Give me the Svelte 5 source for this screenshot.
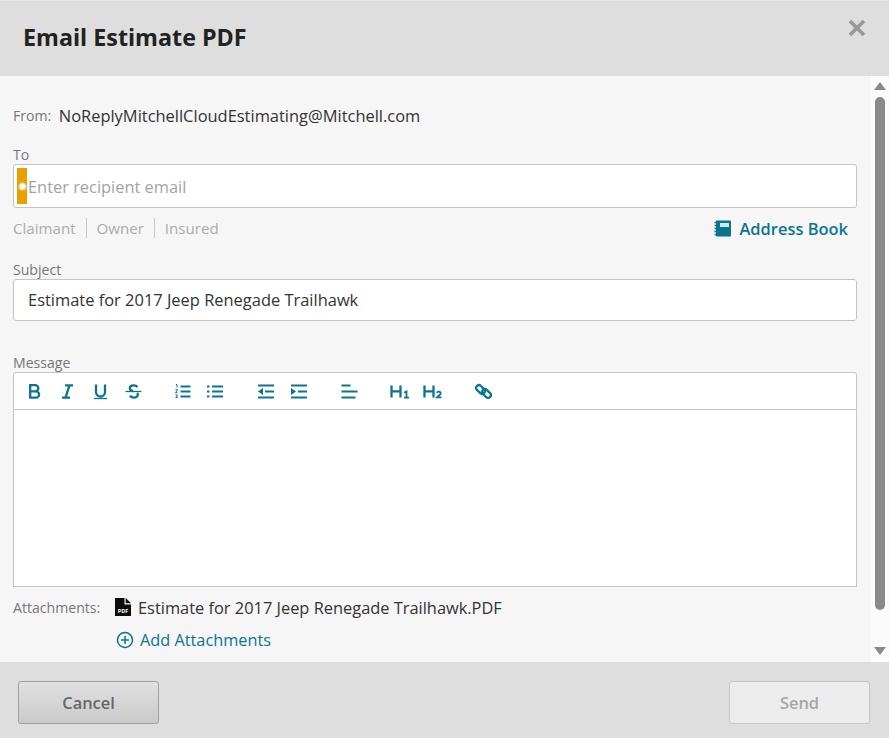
<script>
  const groups = [
    { cls: 'g1', items: ['b', 'i', 'u', 's'] },
    { cls: 'g2', items: ['ol', 'ul'] },
    { cls: 'g3', items: ['out', 'in'] },
    { cls: 'g4', items: ['al'] },
    { cls: 'g5', items: ['h1', 'h2'] },
    { cls: 'g6', items: ['link'] }
  ];
  const wide = (it) => it === 'h1' || it === 'h2';
</script>

<div class="modal">
  <header class="head">
    <h1>Email Estimate PDF</h1>
    <svg class="close" viewBox="0 0 18 18" aria-label="Close"><path d="M2 2l14 14M16 2L2 16" /></svg>
  </header>

  <div class="middle">
    <main class="content">
      <div class="from"><span class="lab">From:</span><span class="addr">NoReplyMitchellCloudEstimating@Mitchell.com</span></div>

      <div class="lab to-lab">To</div>
      <div class="field to">
        <span class="req"><i></i></span>
        <span class="ph">Enter recipient email</span>
      </div>

      <div class="recips">
        <div class="chips"><span>Claimant</span><span>Owner</span><span>Insured</span></div>
        <a class="book" href="#top">
          <svg viewBox="0 0 17 17" width="17" height="17">
            <rect x="2" y="0.500" width="15" height="16" rx="0.800" fill="#0b7590" />
            <rect x="6" y="3" width="9" height="4" fill="#d5e6ea" />
            <path d="M0.500 2.500h3M0.500 5.500h3M0.500 8.500h3M0.500 11.500h3M0.500 14.500h3" stroke="#0b7590" stroke-width="1.300" />
          </svg>
          Address Book
        </a>
      </div>

      <div class="lab sub-lab">Subject</div>
      <div class="field subject">Estimate for 2017 Jeep Renegade Trailhawk</div>

      <div class="lab msg-lab">Message</div>
      <div class="toolbar">
        {#each groups as g}
          <div class="group {g.cls}">
            {#each g.items as it}
              <svg class="ti" viewBox="0 0 {wide(it) ? 20 : 17} 17" width={wide(it) ? 20 : 17} height="17">
                {#if it === 'b'}
                  <path d="M4.200 2.200h5a3.100 3.100 0 0 1 0 6.200H4.200zM4.200 8.400h5.800a3.100 3.100 0 0 1 0 6.200H4.200z" />
                {:else if it === 'i'}
                  <path d="M6 2.400h8M3 14.600h8M10.500 2.400l-4 12.200" />
                {:else if it === 'u'}
                  <path d="M4 1.500v7.500a4.500 4.500 0 0 0 9 0V1.500" /><path class="thin" d="M2 15.500h13" />
                {:else if it === 's'}
                  <path d="M12.500 4.200c-.8-1.300-2.200-1.800-3.800-1.800-2.300 0-3.900 1.100-3.900 2.900 0 1.300 1 2.300 3.200 2.700M5 12.500c.7 1.400 2.200 2.100 3.800 2.100 2.400 0 4-1.200 4-3 0-.6-.2-1.200-.6-1.700" /><path class="thin" d="M0.500 8.500h16" />
                {:else if it === 'ol'}
                  <path class="mid" d="M6.500 3.500h10M6.500 8.500h10M6.500 13.500h10" /><path class="tiny" d="M2 1.500h1v3M1.500 6.700h2l-2 3h2M1.500 12h2l-1 1 1 1.500h-2" />
                {:else if it === 'ul'}
                  <path class="mid" d="M6 3.500h11M6 8.500h11M6 13.500h11M1 3.500h2.500M1 8.500h2.500M1 13.500h2.500" />
                {:else if it === 'out'}
                  <path class="mid" d="M1 2.500h16M8 8.500h9M1 14.500h16" /><path class="fill" d="M6 5v7l-5-3.500z" />
                {:else if it === 'in'}
                  <path class="mid" d="M1 2.500h16M8 8.500h9M1 14.500h16" /><path class="fill" d="M1 5v7l5-3.500z" />
                {:else if it === 'al'}
                  <path class="mid" d="M0.500 2.500h9M0.500 8.500h16M0.500 14.500h14" />
                {:else if it === 'h1'}
                  <path d="M1.500 2.500v12M10.500 2.500v12M1.500 8.400h9" /><path class="sm" d="M14 9.800l2.500-1.300v6.100M14 14.600h5" />
                {:else if it === 'h2'}
                  <path d="M1.500 2.500v12M10.500 2.500v12M1.500 8.400h9" /><path class="sm" d="M13.800 9.800c.3-1 2.200-1.600 3.300-.8 1 .8.500 1.900-.2 2.600l-2.900 2.800h4.500" />
                {:else}
                  <rect x="0.500" y="3.700" width="10" height="5.600" rx="2.800" transform="rotate(45 5.500 6.500)" />
                  <rect x="6.500" y="7.700" width="10" height="5.600" rx="2.800" transform="rotate(45 11.500 10.500)" />
                {/if}
              </svg>
            {/each}
          </div>
        {/each}
      </div>
      <div class="editor"></div>

      <div class="attach">
        <span class="lab att-lab">Attachments:</span>
        <svg class="pdf" viewBox="0 0 16 18" width="16" height="18">
          <path d="M0 0h9.500v6.500H16V18H0z" fill="#0c0c0c" />
          <path d="M10.700 0L16 5.300h-5.300z" fill="#0c0c0c" />
          <text x="8" y="15" text-anchor="middle" class="pdf-t">PDF</text>
        </svg>
        <span class="fname">Estimate for 2017 Jeep Renegade Trailhawk.PDF</span>
      </div>
      <a class="add" href="#top">
        <svg viewBox="0 0 18 18" width="18" height="18"><circle cx="9" cy="9" r="7.500" /><path d="M5 9h8M9 5v8" /></svg>
        Add Attachments
      </a>
    </main>

    <aside class="scroll">
      <span class="arrow up"></span>
      <span class="thumb"></span>
      <span class="arrow down"></span>
    </aside>
  </div>

  <footer class="foot">
    <button class="btn cancel">Cancel</button>
    <button class="btn send" disabled>Send</button>
  </footer>
</div>

<style>
  :global(body) {
    margin: 0;
    background: #dedede;
  }
  .modal {
    width: 889px;
    height: 738px;
    display: flex;
    flex-direction: column;
    font-family: "Open Sans", sans-serif;
    color: #333;
    overflow: hidden;
  }
  .head {
    height: 76px;
    flex: none;
    box-sizing: border-box;
    background: #dedede;
    border-top: 1px solid #e6e6e6;
    padding: 0 23px;
    display: flex;
    align-items: center;
    justify-content: space-between;
    position: relative;
  }
  h1 {
    margin: -3px 0 0;
    font-size: 23.300px;
    font-weight: 700;
    color: #222;
    line-height: 30px;
  }
  .close {
    position: absolute;
    right: 23px;
    top: 18px;
    width: 18px;
    height: 18px;
    fill: none;
    stroke: #999;
    stroke-width: 3.800;
  }
  .middle {
    flex: 1;
    display: flex;
    min-height: 0;
    background: #f6f6f6;
  }
  .content {
    flex: 1;
    min-width: 0;
    box-sizing: border-box;
    padding: 27px 14px 0 13px;
    border-left: 1px solid transparent;
    margin-left: -1px;
  }
  .lab {
    font-size: 14.100px;
    color: #767676;
    line-height: 18px;
  }
  .from {
    display: flex;
    align-items: center;
    gap: 7.500px;
    height: 24px;
  }
  .from .lab {
    padding-top: 1px;
  }
  .addr {
    font-size: 16.450px;
    color: #333;
  }
  .to-lab {
    margin-top: 19px;
  }
  .field {
    background: #fff;
    border: 1px solid #c4c4c4;
    border-radius: 3px;
    box-sizing: border-box;
    display: flex;
    align-items: center;
  }
  .to {
    height: 44px;
    margin-top: 0;
    padding-left: 3px;
  }
  .req {
    width: 10px;
    height: 36px;
    background: #e6a100;
    display: flex;
    align-items: center;
    justify-content: center;
    margin-right: 1px;
  }
  .req i {
    width: 5px;
    height: 5px;
    background: #fff;
    box-shadow: 0 0 2px 1px #fff;
    border-radius: 50%;
  }
  .ph {
    font-size: 16.400px;
    color: #a3a3a3;
  }
  .recips {
    display: flex;
    justify-content: space-between;
    align-items: center;
    height: 28px;
    margin-top: 6px;
  }
  .chips {
    display: flex;
    font-size: 15.100px;
    color: #ababab;
    line-height: 20px;
  }
  .chips span + span {
    margin-left: 10px;
    padding-left: 10px;
    border-left: 1px solid #c9c9c9;
  }
  .book {
    display: flex;
    align-items: center;
    gap: 9px;
    font-size: 16.450px;
    font-weight: 600;
    color: #0b7590;
    text-decoration: none;
    margin-right: 9px;
  }
  .sub-lab {
    margin-top: 19px;
  }
  .subject {
    height: 42px;
    margin-top: 0;
    padding-left: 14px;
    padding-bottom: 2px;
    font-size: 16.450px;
    color: #333;
  }
  .msg-lab {
    margin-top: 33px;
    height: 18px;
  }
  .toolbar {
    height: 38px;
    margin-top: 0;
    box-sizing: border-box;
    background: #fff;
    border: 1px solid #c4c4c4;
    border-radius: 3px 3px 0 0;
    display: flex;
    align-items: center;
    padding-left: 12px;
  }
  .group {
    display: flex;
    gap: 16px;
  }
  .g2 { margin-left: 32px; gap: 15px; }
  .g3 { margin-left: 34px; }
  .g4 { margin-left: 34px; }
  .g5 { margin-left: 32px; gap: 13px; }
  .g6 { margin-left: 32px; }
  .ti {
    fill: none;
    stroke: #0b7590;
    stroke-width: 2.300;
  }
  .ti .thin { stroke-width: 1.300; }
  .ti .mid { stroke-width: 2.100; }
  .ti .tiny { stroke-width: 1; }
  .ti .sm { stroke-width: 1.800; }
  .ti .fill { fill: #0b7590; stroke: none; }
  .editor {
    height: 177px;
    box-sizing: border-box;
    background: #fff;
    border: 1px solid #c4c4c4;
    border-top: 0;
  }
  .attach {
    display: flex;
    align-items: center;
    height: 24px;
    margin-top: 9px;
  }
  .att-lab {
    width: 102px;
  }
  .pdf {
    margin-top: -2px;
  }
  .pdf-t {
    font-size: 5.500px;
    font-weight: 700;
    fill: #fff;
    font-family: "Open Sans", sans-serif;
  }
  .fname {
    margin-left: 7px;
    margin-top: -2px;
    font-size: 16.400px;
    color: #333;
  }
  .add {
    display: flex;
    align-items: center;
    gap: 6.500px;
    margin: 8px 0 0 102.500px;
    height: 24px;
    font-size: 16.300px;
    color: #0b7590;
    text-decoration: none;
  }
  .add svg {
    fill: none;
    stroke: #0b7590;
    stroke-width: 1.500;
  }
  .scroll {
    width: 18px;
    flex: none;
    background: #fbfbfb;
    display: flex;
    flex-direction: column;
    align-items: center;
    padding-top: 6px;
    box-sizing: border-box;
  }
  .arrow {
    width: 0;
    height: 0;
    border-left: 6px solid transparent;
    border-right: 6px solid transparent;
    flex: none;
  }
  .up {
    border-bottom: 8px solid #8a8a8a;
  }
  .down {
    border-top: 8px solid #8a8a8a;
    margin-top: 37px;
  }
  .thumb {
    width: 10px;
    height: 513px;
    margin-top: 7px;
    background: #8a8a8a;
    border-radius: 5px;
    flex: none;
  }
  .foot {
    height: 76px;
    flex: none;
    box-sizing: border-box;
    background: #dedede;
    display: flex;
    justify-content: space-between;
    padding: 19px 19px 0 18px;
  }
  .btn {
    width: 141px;
    height: 43px;
    box-sizing: border-box;
    border-radius: 3px;
    font-family: "Open Sans", sans-serif;
    font-size: 16.400px;
    font-weight: 600;
    padding: 0;
  }
  .cancel {
    background: linear-gradient(#e0e0e0, #cacaca);
    border: 1px solid #9f9f9f;
    color: #666;
  }
  .send {
    background: #ededed;
    border: 1px solid #c6c6c6;
    color: #a6a6a6;
  }
</style>
